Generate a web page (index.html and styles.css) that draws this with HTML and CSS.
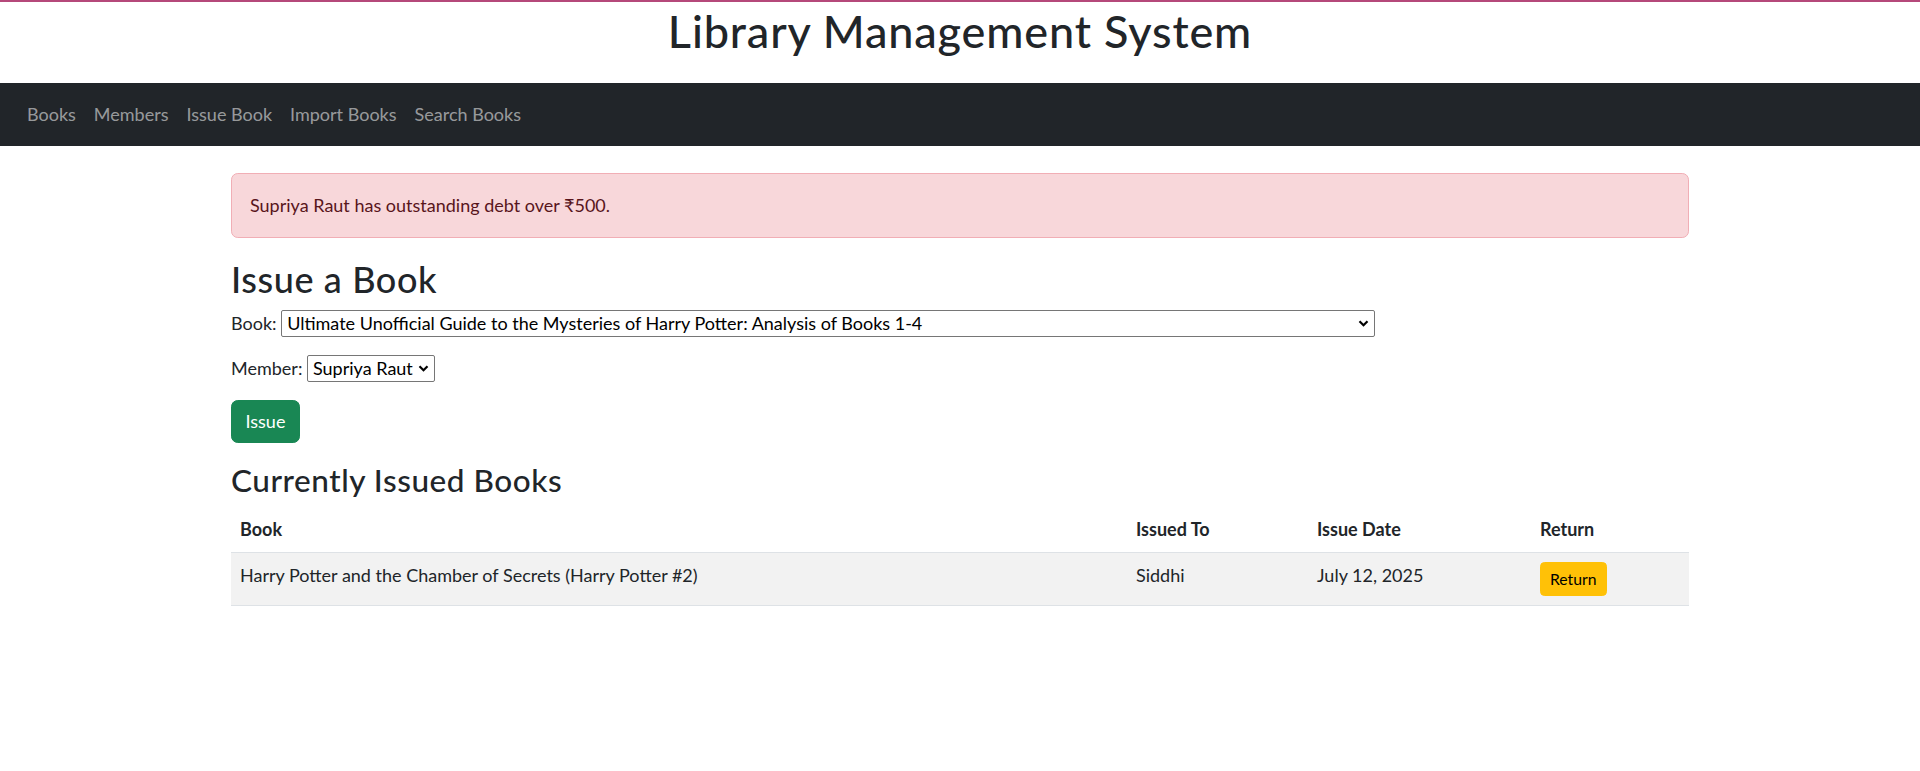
FILE: index.html
```html
<!DOCTYPE html>
<html lang="en">
<head>
<meta charset="utf-8">
<title>Library Management System</title>
<link rel="stylesheet" href="styles.css">
</head>
<body>
<h1 class="site-title">Library Management System</h1>
<nav class="navbar">
  <a class="nav-link" href="#">Books</a>
  <a class="nav-link" href="#">Members</a>
  <a class="nav-link" href="#">Issue Book</a>
  <a class="nav-link" href="#">Import Books</a>
  <a class="nav-link" href="#">Search Books</a>
</nav>
<main class="container">
  <div class="alert alert-danger">Supriya Raut has outstanding debt over ₹500.</div>

  <h2 class="section-title">Issue a Book</h2>
  <form class="issue-form">
    <div class="form-row">
      <label>Book:</label>
      <span class="select-wrap select-book">
        <select class="select">
          <option>Ultimate Unofficial Guide to the Mysteries of Harry Potter: Analysis of Books 1-4</option>
        </select>
        <svg class="chevron" viewBox="0 0 10 7" aria-hidden="true"><path d="M1 1.3 L5 5.3 L9 1.3"/></svg>
      </span>
    </div>
    <div class="form-row">
      <label>Member:</label>
      <span class="select-wrap select-member">
        <select class="select">
          <option>Supriya Raut</option>
        </select>
        <svg class="chevron" viewBox="0 0 10 7" aria-hidden="true"><path d="M1 1.3 L5 5.3 L9 1.3"/></svg>
      </span>
    </div>
    <button type="button" class="btn btn-success">Issue</button>
  </form>

  <h3 class="subsection-title">Currently Issued Books</h3>
  <table class="table">
    <colgroup>
      <col class="col-book">
      <col class="col-member">
      <col class="col-date">
      <col class="col-return">
    </colgroup>
    <thead>
      <tr>
        <th>Book</th>
        <th>Issued To</th>
        <th>Issue Date</th>
        <th>Return</th>
      </tr>
    </thead>
    <tbody>
      <tr class="striped">
        <td>Harry Potter and the Chamber of Secrets (Harry Potter #2)</td>
        <td>Siddhi</td>
        <td>July 12, 2025</td>
        <td><button type="button" class="btn btn-warning btn-sm">Return</button></td>
      </tr>
    </tbody>
  </table>
</main>
</body>
</html>
```
FILE: styles.css
```css
* {
  box-sizing: border-box;
}

html, body {
  margin: 0;
  padding: 0;
}

body {
  border-top: 2px solid #b5487a;
  background: #fff;
  color: #212529;
  font-family: Lato, "Noto Sans", sans-serif;
  font-size: 18px;
  line-height: 27px;
}

.site-title {
  margin: 2px 0 25px;
  text-align: center;
  font-size: 45px;
  font-weight: 500;
  line-height: 54px;
  letter-spacing: 0.85px;
  color: #212529;
}

.navbar {
  display: flex;
  padding: 9px 18px;
  background: #212529;
}

.nav-link {
  display: block;
  padding: 9px;
  color: rgba(255, 255, 255, 0.55);
  text-decoration: none;
  line-height: 27px;
}

.container {
  width: 1458px;
  margin: 27px auto 0;
}

.alert {
  margin-bottom: 20px;
  padding: 18px;
  border: 1px solid #f1aeb5;
  border-radius: 6.75px;
}

.alert-danger {
  background: #f8d7da;
  color: #58151c;
}

.section-title {
  margin: 0 0 9px;
  font-size: 36px;
  font-weight: 500;
  line-height: 43.2px;
  letter-spacing: 0.6px;
}

.issue-form {
  margin: 0 0 19px;
}

.form-row {
  margin-bottom: 18px;
  line-height: 27px;
}

.select-wrap {
  position: relative;
  display: inline-block;
  vertical-align: baseline;
}

.select {
  -webkit-appearance: none;
  appearance: none;
  height: 27px;
  margin: 0;
  padding: 0 24px 0 5px;
  border: 1px solid #767676;
  border-radius: 2px;
  background: #fff;
  color: #000;
  font-family: Lato, "Noto Sans", sans-serif;
  font-size: 18px;
  line-height: 25px;
}

.select-book .select {
  width: 1094px;
}

.select-member .select {
  width: 128px;
  padding-right: 12px;
}

.chevron {
  position: absolute;
  right: 6px;
  top: 10px;
  width: 11px;
  height: 7px;
  pointer-events: none;
  fill: none;
  stroke: #000;
  stroke-width: 2.2;
}

.btn {
  display: inline-block;
  margin: 0;
  padding: 6.75px 13.5px;
  border: 1px solid transparent;
  border-radius: 6.75px;
  font-family: Lato, "Noto Sans", sans-serif;
  font-size: 18px;
  line-height: 27px;
  cursor: pointer;
}

.btn-success {
  background: #198754;
  border-color: #198754;
  color: #fff;
}

.btn-warning {
  background: #ffc107;
  border-color: #ffc107;
  color: #000;
}

.btn-sm {
  padding: 4.5px 9px;
  border-radius: 4.5px;
  font-size: 15.75px;
  line-height: 23.6px;
}

.subsection-title {
  margin: 0 0 7px;
  font-size: 31.5px;
  font-weight: 500;
  line-height: 37.8px;
  letter-spacing: 0.55px;
}

.table {
  width: 100%;
  margin-bottom: 18px;
  border-collapse: collapse;
  color: #212529;
}

.col-book { width: 896px; }
.col-member { width: 181px; }
.col-date { width: 223px; }
.col-return { width: 158px; }

.table th,
.table td {
  padding: 9px;
  border-bottom: 1px solid #dee2e6;
  text-align: left;
  vertical-align: top;
  line-height: 27px;
}

.table th {
  font-weight: 700;
}

.table .striped td {
  background: #f2f2f2;
}
```
